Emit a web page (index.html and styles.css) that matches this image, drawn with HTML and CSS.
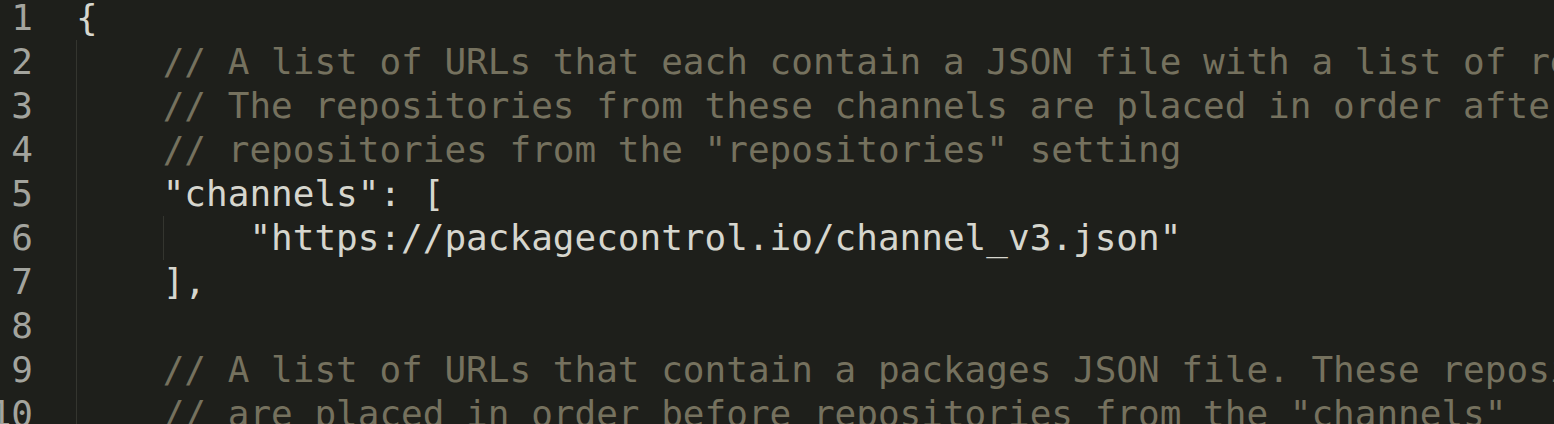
FILE: index.html
```html
<!DOCTYPE html>
<html>
<head>
<meta charset="utf-8">
<link rel="stylesheet" href="styles.css">
</head>
<body>
<div class="editor">
  <div class="line"><span class="ln">1</span><span class="code">{</span></div>
  <div class="line"><span class="ln">2</span><span class="code"><span class="ind"></span><span class="cm">// A list of URLs that each contain a JSON file with a list of repositories.</span></span></div>
  <div class="line"><span class="ln">3</span><span class="code"><span class="ind"></span><span class="cm">// The repositories from these channels are placed in order after the</span></span></div>
  <div class="line"><span class="ln">4</span><span class="code"><span class="ind"></span><span class="cm">// repositories from the "repositories" setting</span></span></div>
  <div class="line"><span class="ln">5</span><span class="code"><span class="ind"></span>"channels": [</span></div>
  <div class="line"><span class="ln">6</span><span class="code"><span class="ind"></span><span class="ind"></span>"https://packagecontrol.io/channel_v3.json"</span></div>
  <div class="line"><span class="ln">7</span><span class="code"><span class="ind"></span>],</span></div>
  <div class="line"><span class="ln">8</span><span class="code"><span class="ind"></span></span></div>
  <div class="line"><span class="ln">9</span><span class="code"><span class="ind"></span><span class="cm">// A list of URLs that contain a packages JSON file. These repositories</span></span></div>
  <div class="line"><span class="ln">10</span><span class="code"><span class="ind"></span><span class="cm">// are placed in order before repositories from the "channels"</span></span></div>
</div>
</body>
</html>
```
FILE: styles.css
```css
html, body {
  margin: 0;
  padding: 0;
  background: #1e1f1b;
  overflow: hidden;
}
.editor {
  margin-top: -4px;
  font-family: "DejaVu Sans Mono", "Liberation Mono", monospace;
  font-size: 36px;
  line-height: 44px;
  color: #d6d6ce;
}
.line {
  display: flex;
  height: 44px;
  width: 1554px;
  overflow: hidden;
}
.ln {
  flex: 0 0 33px;
  width: 33px;
  min-width: 0;
  text-align: right;
  color: #a3a49e;
  direction: rtl;
  white-space: nowrap;
}
.code {
  display: flex;
  padding-left: 43px;
  white-space: pre;
}
.ind {
  display: inline-block;
  flex: 0 0 auto;
  width: 4ch;
  height: 44px;
  border-left: 1px solid #34352f;
  box-sizing: border-box;
}
.cm {
  color: #75715e;
}
```
